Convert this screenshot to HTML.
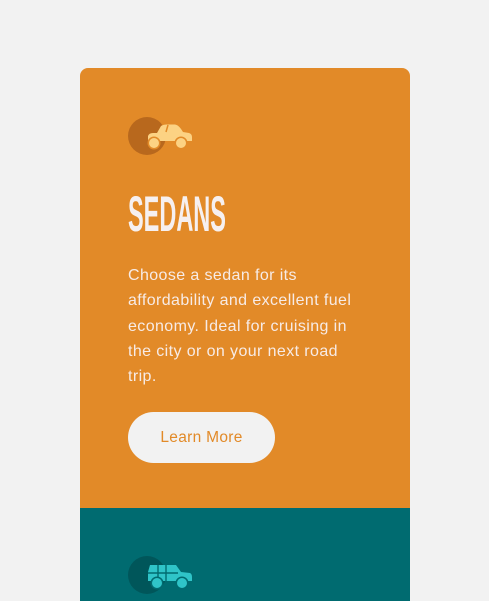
<!DOCTYPE html>
<html><head><meta charset="utf-8"><style>
html,body{margin:0;padding:0;background:#f2f2f2;width:489px;height:601px;overflow:hidden;font-family:"Liberation Sans",sans-serif}
.card{position:absolute;left:80px;top:68px;width:330px;height:440px;background:#e28a28;border-radius:8px 8px 0 0}
.teal{position:absolute;left:80px;top:508px;width:330px;height:93px;background:#006b70}
.circ{position:absolute;width:38px;height:38px;border-radius:50%}
h1{position:absolute;left:128px;top:186px;margin:0;font-family:"Liberation Sans Narrow","Liberation Sans",sans-serif;font-weight:bold;font-size:50px;line-height:56px;color:#f6f0f0;transform:scaleX(0.47);transform-origin:left;white-space:nowrap}
p{position:absolute;left:128px;top:263px;margin:0;font-size:16px;line-height:25.3px;color:#f7ebe6;letter-spacing:0.4px;white-space:nowrap}
.btn{position:absolute;left:128px;top:412px;width:147px;height:51px;border-radius:26px;background:#f2f2f2;color:#e28a28;font-size:15.5px;text-align:center;line-height:51px;letter-spacing:0.3px}
svg{position:absolute}
</style></head><body>
<div class="card"></div>
<div class="teal"></div>
<div class="circ" style="left:128px;top:117px;background:#b8681d"></div>
<svg style="left:146px;top:123px" width="48" height="28" viewBox="0 0 48 28">
<path d="M11 10 L15 3 Q17 1.5 21 1.5 L29 1.5 Q33 2 37 9 L43 10 Q46 11 46 14 L46 18 L2 18 L2 13 Q3 10 7 10 Z" fill="#fcd283"/>
<path d="M22 2 L20 9" stroke="#e28a28" stroke-width="1.5"/>
<circle cx="8" cy="20" r="6.5" fill="#e28a28"/><circle cx="8" cy="20" r="5" fill="#fcd283"/>
<circle cx="35" cy="20" r="6.5" fill="#e28a28"/><circle cx="35" cy="20" r="5" fill="#fcd283"/>
</svg>
<h1>SEDANS</h1>
<p>Choose a sedan for its<br>affordability and excellent fuel<br>economy. Ideal for cruising in<br>the city or on your next road<br>trip.</p>
<div class="btn">Learn More</div>
<div class="circ" style="left:128px;top:556px;background:#00565a"></div>
<svg style="left:146px;top:562px" width="48" height="28" viewBox="0 0 48 28">
<path d="M4 3 L30 3 L35 10 L44 11 Q46 12 46 15 L46 19 L2 19 L2 10 Z" fill="#2fc4c8"/>
<path d="M12 3 L12 19 M20 3 L20 19 M2 11 L32 11" stroke="#006b70" stroke-width="1.4"/>
<circle cx="11" cy="21" r="6.5" fill="#006b70"/><circle cx="11" cy="21" r="5" fill="#2fc4c8"/>
<circle cx="36" cy="21" r="6.5" fill="#006b70"/><circle cx="36" cy="21" r="5" fill="#2fc4c8"/>
</svg>
</body></html>
